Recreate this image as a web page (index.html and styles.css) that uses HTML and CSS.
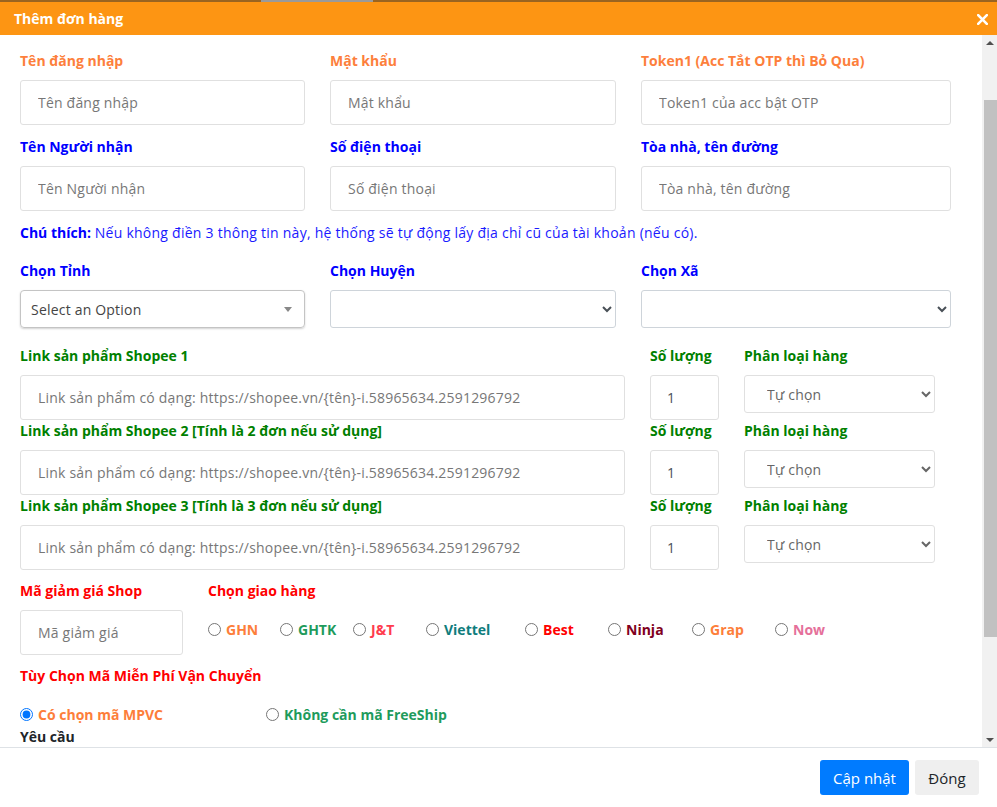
FILE: index.html
```html
<!DOCTYPE html>
<html lang="vi">
<head>
<meta charset="utf-8">
<title>Thêm đơn hàng</title>
<link rel="stylesheet" href="styles.css">
</head>
<body>
<div class="strip"><span class="strip-seg"></span></div>
<div class="modal">
  <header class="modal-header">
    <h5 class="modal-title">Thêm đơn hàng</h5>
    <svg class="close" width="11" height="11" viewBox="0 0 11 11"><path d="M1.2 1.2L9.8 9.8M9.8 1.2L1.2 9.8" stroke="#fff" stroke-width="2.6" stroke-linecap="square"/></svg>
  </header>
  <div class="body-wrap">
    <div class="modal-body">
      <div class="row3">
        <div class="field"><label class="lbl orange">Tên đăng nhập</label><input class="inp" placeholder="Tên đăng nhập"></div>
        <div class="field"><label class="lbl orange">Mật khẩu</label><input class="inp" placeholder="Mật khẩu"></div>
        <div class="field"><label class="lbl orange">Token1 (Acc Tắt OTP thì Bỏ Qua)</label><input class="inp" placeholder="Token1 của acc bật OTP"></div>
      </div>
      <div class="row3 mt11">
        <div class="field"><label class="lbl blue">Tên Người nhận</label><input class="inp" placeholder="Tên Người nhận"></div>
        <div class="field"><label class="lbl blue">Số điện thoại</label><input class="inp" placeholder="Số điện thoại"></div>
        <div class="field"><label class="lbl blue">Tòa nhà, tên đường</label><input class="inp" placeholder="Tòa nhà, tên đường"></div>
      </div>
      <p class="note"><b>Chú thích:</b> Nếu không điền 3 thông tin này, hệ thống sẽ tự động lấy địa chỉ cũ của tài khoản (nếu có).</p>
      <div class="row3 mt17">
        <div class="field"><label class="lbl blue">Chọn Tỉnh</label>
          <div class="select2"><span>Select an Option</span><span class="caret"></span></div>
        </div>
        <div class="field"><label class="lbl blue">Chọn Huyện</label><select class="sel"></select></div>
        <div class="field"><label class="lbl blue">Chọn Xã</label><select class="sel"></select></div>
      </div>
      <div class="prod mt17">
        <div class="field"><label class="lbl green">Link sản phẩm Shopee 1</label><input class="inp" placeholder="Link sản phẩm có dạng: https://shopee.vn/{tên}-i.58965634.2591296792"></div>
        <div class="field"><label class="lbl green">Số lượng</label><input class="inp qty" value="1"></div>
        <div class="field"><label class="lbl green">Phân loại hàng</label><select class="sel cls"><option>Tự chọn</option></select></div>
      </div>
      <div class="prod">
        <div class="field"><label class="lbl green">Link sản phẩm Shopee 2 [Tính là 2 đơn nếu sử dụng]</label><input class="inp" placeholder="Link sản phẩm có dạng: https://shopee.vn/{tên}-i.58965634.2591296792"></div>
        <div class="field"><label class="lbl green">Số lượng</label><input class="inp qty" value="1"></div>
        <div class="field"><label class="lbl green">Phân loại hàng</label><select class="sel cls"><option>Tự chọn</option></select></div>
      </div>
      <div class="prod">
        <div class="field"><label class="lbl green">Link sản phẩm Shopee 3 [Tính là 3 đơn nếu sử dụng]</label><input class="inp" placeholder="Link sản phẩm có dạng: https://shopee.vn/{tên}-i.58965634.2591296792"></div>
        <div class="field"><label class="lbl green">Số lượng</label><input class="inp qty" value="1"></div>
        <div class="field"><label class="lbl green">Phân loại hàng</label><select class="sel cls"><option>Tự chọn</option></select></div>
      </div>
      <div class="ship mt10">
        <div class="field"><label class="lbl red">Mã giảm giá Shop</label><input class="inp" placeholder="Mã giảm giá"></div>
        <div class="field"><label class="lbl red">Chọn giao hàng</label>
          <div class="carriers">
            <label class="carrier c-ghn"><input type="radio" name="dv">GHN</label>
            <label class="carrier c-ghtk"><input type="radio" name="dv">GHTK</label>
            <label class="carrier c-jt"><input type="radio" name="dv">J&amp;T</label>
            <label class="carrier c-vt"><input type="radio" name="dv">Viettel</label>
            <label class="carrier c-best"><input type="radio" name="dv">Best</label>
            <label class="carrier c-ninja"><input type="radio" name="dv">Ninja</label>
            <label class="carrier c-grap"><input type="radio" name="dv">Grap</label>
            <label class="carrier c-now"><input type="radio" name="dv">Now</label>
          </div>
        </div>
      </div>
      <label class="lbl red block mt10">Tùy Chọn Mã Miễn Phí Vận Chuyển</label>
      <div class="mpvc">
        <label class="opt o-yes"><input type="radio" name="mp" checked>Có chọn mã MPVC</label>
        <label class="opt o-no"><input type="radio" name="mp">Không cần mã FreeShip</label>
      </div>
      <label class="lbl dark block">Yêu cầu</label>
    </div>
    <div class="scrollbar">
      <div class="sb-btn"><span class="tri-up"></span></div>
      <div class="sb-track"><div class="sb-thumb"></div></div>
      <div class="sb-btn"><span class="tri-down"></span></div>
    </div>
  </div>
  <footer class="modal-footer">
    <button class="btn btn-primary">Cập nhật</button>
    <button class="btn btn-light">Đóng</button>
  </footer>
</div>
</body>
</html>
```
FILE: styles.css
```css
* { box-sizing: border-box; }
html, body { margin: 0; padding: 0; background: #fff; }
body { font-family: "Open Sans", "Noto Sans", sans-serif; font-size: 14px; color: #212529; }

.strip { height: 2px; background: #9a6420; display: flex; }
.strip-seg { margin-left: 261px; width: 112px; background: #9a9a9a; }

.modal { display: flex; flex-direction: column; height: 805px; }
.modal-header { height: 33px; background: #fd9513; display: flex; align-items: center; justify-content: space-between; padding: 0 9px 0 14px; }
.modal-title { margin: 0; font-size: 14px; font-weight: 700; color: #fff; line-height: 20px; }
.close { display: block; margin-top: 1px; }

.body-wrap { height: 712px; display: flex; }
.modal-body { flex: 1; overflow: hidden; padding: 15px 0 0 20px; }

.scrollbar { width: 15px; background: #f1f1f1; display: flex; flex-direction: column; }
.sb-btn { height: 15px; display: flex; align-items: center; justify-content: center; }
.tri-up { width: 0; height: 0; border-left: 4px solid transparent; border-right: 4px solid transparent; border-bottom: 4px solid #505050; }
.tri-down { width: 0; height: 0; border-left: 4px solid transparent; border-right: 4px solid transparent; border-top: 4px solid #505050; }
.sb-track { flex: 1; padding-top: 50px; }
.sb-thumb { margin-left: 2px; height: 537px; background: #c1c1c1; }

.row3 { display: grid; grid-template-columns: 285px 286px 310px; column-gap: 25px; }
.prod { display: grid; grid-template-columns: 605px 69px 191px; column-gap: 25px; }
.ship { display: grid; grid-template-columns: 163px 1fr; column-gap: 25px; }
.field { display: flex; flex-direction: column; min-width: 0; }
.mt10 { margin-top: 10px; }
.mt11 { margin-top: 11px; }
.mt17 { margin-top: 17px; }

.lbl { font-weight: 700; font-size: 14px; line-height: 21px; margin-bottom: 9px; white-space: nowrap; }
.block { display: block; }
.orange { color: #fd7f3c; }
.blue { color: #0000ff; }
.green { color: #008000; }
.red { color: #ff0000; }
.dark { color: #212529; margin: 2px 0 0; line-height: 20px; }

.inp { height: 45px; width: 100%; border: 1px solid #e0e0e0; border-radius: 3px; padding: 0 17px; font: 14px "Open Sans", sans-serif; letter-spacing: 0.2px; color: #495057; background: #fff; outline: none; }
.inp::placeholder { color: #777; }
.qty { padding-left: 16px; }

.sel { height: 38px; width: 100%; border: 1px solid #ced4da; border-radius: 3px; background: #fff; font: 14px "Open Sans", sans-serif; letter-spacing: 0.2px; color: #495057; padding: 0 8px; outline: none; }
.sel.cls { height: 38px; padding-left: 18px; color: #666; border-color: #e0e0e0; }

.select2 { height: 38px; border: 1px solid #c4c4c4; border-radius: 4px; box-shadow: 0 1px 2px rgba(0,0,0,0.18); display: flex; align-items: center; justify-content: space-between; padding: 0 12px 0 10px; color: #444; font-size: 14px; letter-spacing: 0.2px; }
.caret { width: 0; height: 0; border-left: 4px solid transparent; border-right: 4px solid transparent; border-top: 5px solid #888; }

.note { margin: 11px 0 0; font-size: 14px; line-height: 21px; color: #1a1aff; white-space: nowrap; letter-spacing: 0.25px; }
.note b { color: #0000ff; letter-spacing: 0; }

.carriers { display: flex; align-items: center; height: 45px; padding-bottom: 6px; }
.carrier { display: flex; align-items: center; font-weight: 700; font-size: 14px; line-height: 21px; flex: none; }
.carrier input, .opt input { margin: 0 5px 0 0; width: 13px; height: 13px; }
.c-ghn { width: 72px; color: #fd7e3a; }
.c-ghtk { width: 73px; color: #1e9b5c; }
.c-jt { width: 73px; color: #ff3c4e; }
.c-vt { width: 99px; color: #0f7d7d; }
.c-best { width: 83px; color: #ff0000; }
.c-ninja { width: 84px; color: #800020; }
.c-grap { width: 83px; color: #fd7e3a; }
.c-now { color: #e5709a; }

.mpvc { display: flex; margin-top: 18px; height: 21px; align-items: center; }
.opt { display: flex; align-items: center; font-weight: 700; font-size: 14px; line-height: 21px; }
.o-yes { width: 246px; color: #fd7e3a; }
.o-no { color: #1e9b5c; }

.modal-footer { border-top: 1px solid #dee2e6; flex: 1; display: flex; justify-content: flex-end; align-items: flex-start; padding: 12px 18px 0 0; gap: 6px; }
.btn { height: 35px; border: none; border-radius: 3px; font: 15px "Open Sans", sans-serif; padding: 0; white-space: nowrap; text-align: center; }
.btn-primary { background: #007bff; color: #fff; width: 89px; }
.btn-light { background: #efefef; color: #212529; width: 64px; }
```
